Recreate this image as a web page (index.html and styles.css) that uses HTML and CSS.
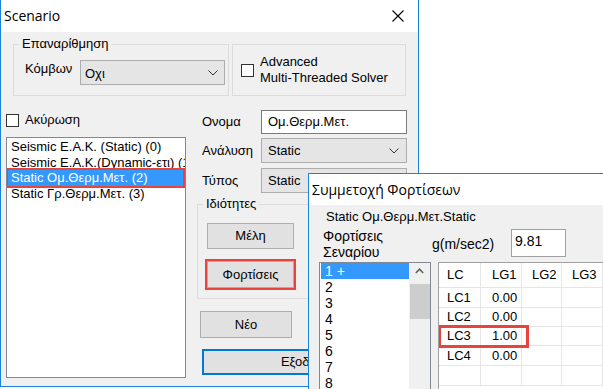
FILE: index.html
```html
<!DOCTYPE html>
<html lang="el">
<head>
<meta charset="utf-8">
<title>Scenario</title>
<link rel="stylesheet" href="styles.css">
</head>
<body>
<div class="win main">
  <div class="titlebar">
    <span class="title">Scenario</span>
    <svg class="close" width="12" height="12" viewBox="0 0 12 12"><path d="M0.5 0.5 L11.5 11.5 M11.5 0.5 L0.5 11.5" stroke="#000" stroke-width="1.1" fill="none"/></svg>
  </div>
  <div class="mbody">
    <div class="row1">
      <fieldset class="grp g1">
        <legend>Επαναρίθμηση</legend>
        <div class="g1-in">
          <span class="lbl-k">Κόμβων</span>
          <div class="combo c-oxi"><span class="ctext">Οχι</span><svg class="chev" width="10" height="6" viewBox="0 0 10 6"><path d="M0.5 0.5 L5 5 L9.5 0.5" stroke="#333" stroke-width="1" fill="none"/></svg></div>
        </div>
      </fieldset>
      <div class="grp g2">
        <span class="chk"></span>
        <span class="chk-text">Advanced<br>Multi-Threaded Solver</span>
      </div>
    </div>
    <div class="row2">
      <div class="leftcol">
        <div class="chkrow"><span class="chk"></span><span>Ακύρωση</span></div>
        <div class="listbox">
          <div class="item">Seismic Ε.Α.Κ. (Static) (0)</div>
          <div class="item">Seismic Ε.Α.Κ.(Dynamic-ετι) (1)</div>
          <div class="item sel">Static Ομ.Θερμ.Μετ. (2)</div>
          <div class="item">Static Γρ.Θερμ.Μετ. (3)</div>
        </div>
      </div>
      <div class="rightcol">
        <div class="field f1"><span class="flabel">Ονομα</span><div class="textbox">Ομ.Θερμ.Μετ.</div></div>
        <div class="field f2"><span class="flabel">Ανάλυση</span><div class="combo c-wide"><span class="ctext">Static</span><svg class="chev" width="10" height="6" viewBox="0 0 10 6"><path d="M0.5 0.5 L5 5 L9.5 0.5" stroke="#333" stroke-width="1" fill="none"/></svg></div></div>
        <div class="field f3"><span class="flabel">Τύπος</span><div class="combo c-wide"><span class="ctext">Static</span><svg class="chev" width="10" height="6" viewBox="0 0 10 6"><path d="M0.5 0.5 L5 5 L9.5 0.5" stroke="#333" stroke-width="1" fill="none"/></svg></div></div>
        <fieldset class="grp g3">
          <legend>Ιδιότητες</legend>
          <div class="g3-in">
            <div class="btn b-mel">Μέλη</div>
            <div class="btn b-fort">Φορτίσεις</div>
          </div>
        </fieldset>
        <div class="btn b-neo">Νέο</div>
        <div class="btn b-exit">Εξοδος</div>
      </div>
    </div>
  </div>
</div>

<div class="win dlg">
  <div class="titlebar t2">
    <span class="title">Συμμετοχή Φορτίσεων</span>
  </div>
  <div class="dbody">
    <div class="dname">Static Ομ.Θερμ.Μετ.Static</div>
    <div class="drow">
      <div class="dlabel">Φορτίσεις<br>Σεναρίου</div>
      <div class="glabel">g(m/sec2)</div>
      <div class="ginput">9.81</div>
    </div>
    <div class="drow3">
      <div class="nlist">
        <div class="nitems">
          <div class="nitem sel">1 +</div>
          <div class="nitem">2</div>
          <div class="nitem">3</div>
          <div class="nitem">4</div>
          <div class="nitem">5</div>
          <div class="nitem">6</div>
          <div class="nitem">7</div>
          <div class="nitem">8</div>
        </div>
        <div class="sbar">
          <svg class="sup" width="9" height="6" viewBox="0 0 9 6"><path d="M0.8 5 L4.5 1.2 L8.2 5" stroke="#606060" stroke-width="1.6" fill="none"/></svg>
          <div class="thumb"></div>
        </div>
      </div>
      <div class="grid">
        <div class="grow hdr"><div class="c c1">LC</div><div class="c c2">LG1</div><div class="c c3">LG2</div><div class="c c4">LG3</div><div class="c c5"></div></div>
        <div class="grow r1"><div class="c c1">LC1</div><div class="c c2">0.00</div><div class="c c3"></div><div class="c c4"></div><div class="c c5"></div></div>
        <div class="grow r2"><div class="c c1">LC2</div><div class="c c2">0.00</div><div class="c c3"></div><div class="c c4"></div><div class="c c5"></div></div>
        <div class="grow r3"><div class="c c1">LC3</div><div class="c c2">1.00</div><div class="c c3"></div><div class="c c4"></div><div class="c c5"></div></div>
        <div class="grow r4"><div class="c c1">LC4</div><div class="c c2">0.00</div><div class="c c3"></div><div class="c c4"></div><div class="c c5"></div></div>
        <div class="grow r5"><div class="c c1"></div><div class="c c2"></div><div class="c c3"></div><div class="c c4"></div><div class="c c5"></div></div>
        <div class="redbox"></div>
      </div>
    </div>
  </div>
</div>
</body>
</html>
```

FILE: styles.css
```css
* { box-sizing: border-box; margin: 0; padding: 0; }
html, body { width: 603px; height: 389px; overflow: hidden; background: #fff; }
body {
  position: relative;
  font-family: "Liberation Sans", Arial, sans-serif;
  font-size: 13px;
  line-height: 16px;
  color: #000;
}

.win {
  position: absolute;
  border: 1px solid #1a82d9;
  background: #f0f0f0;
  display: flex;
  flex-direction: column;
  overflow: hidden;
}
.main { left: 0; top: -1px; width: 419px; height: 388px; }
.dlg { left: 308px; top: 173px; width: 295px; height: 216px; border-right: none; border-bottom: none; }

.titlebar {
  flex: none;
  height: 32px;
  background: #fff;
  display: flex;
  align-items: center;
  justify-content: space-between;
}
.t2 { height: 31px; }
.title {
  font-family: "Open Sans", "Noto Sans", sans-serif;
  font-size: 14px;
  padding-left: 3px;
}
.close { margin-right: 14px; }

/* main body */
.mbody { flex: 1; padding: 5px 0 0 5px; display: flex; flex-direction: column; }
.row1 { display: flex; gap: 3px; margin-left: 7px; }

fieldset.grp {
  border: 1px solid #dcdcdc;
  padding: 0;
  min-width: 0;
}
fieldset.grp legend {
  line-height: 14px;
  padding: 0 3px;
  margin-left: 5px;
}
.g1 { width: 216px; }
.g1-in { display: flex; padding: 9px 3px 10px 11px; }
.lbl-k { width: 55px; margin-top: 1px; }

.combo {
  height: 25px;
  background: #e5e5e5;
  border: 1px solid #adadad;
  display: flex;
  align-items: center;
  justify-content: space-between;
}
.c-oxi { width: 145px; padding: 0 6px 0 4px; }
.c-oxi .ctext { margin-top: 3px; }
.c-wide { width: 146px; padding: 0 7px 0 6px; }

.g2 {
  width: 174px;
  height: 52px;
  margin-top: 7px;
  border: 1px solid #dcdcdc;
  display: flex;
  align-items: center;
  padding-left: 8px;
}
.chk {
  flex: none;
  width: 13px;
  height: 13px;
  background: #fff;
  border: 1px solid #333;
}
.g2 .chk-text { margin-left: 6px; }

.row2 { display: flex; margin-top: 14px; }
.leftcol { width: 180px; display: flex; flex-direction: column; }
.chkrow { height: 20px; display: flex; align-items: center; gap: 6px; }
.listbox {
  margin-top: 7px;
  height: 241px;
  background: #fff;
  border: 1px solid #828790;
  padding: 1px 2px 1px 1px;
  overflow: hidden;
}
.item {
  height: 15.6px;
  line-height: 15.6px;
  padding-left: 3px;
  white-space: nowrap;
}
.item.sel {
  background: #3399ff;
  color: #fff;
  outline: 2px solid #e8433d;
}

.rightcol { width: 210px; margin-left: 11px; display: flex; flex-direction: column; }
.field { display: flex; align-items: center; }
.flabel { width: 59px; margin-left: 5px; }
.f1 { height: 24px; }
.f2 { margin-top: 4px; }
.f3 { margin-top: 5px; }
.textbox {
  width: 146px;
  height: 24px;
  background: #fff;
  border: 1px solid #7a7a7a;
  padding-left: 6px;
  display: flex;
  align-items: center;
}

.g3 { margin-top: 4px; }
.g3-in { padding: 12px 0 10px 9px; display: flex; flex-direction: column; gap: 12px; }

.btn {
  background: #e1e1e1;
  border: 1px solid #adadad;
  display: flex;
  align-items: center;
  justify-content: center;
}
.b-mel { width: 87px; height: 26px; }
.b-fort { width: 87px; height: 27px; outline: 2px solid #e8433d; }
.b-neo { width: 92px; height: 27px; margin-top: 12px; margin-left: 3px; }
.b-exit { width: 200px; height: 26px; margin-top: 11px; margin-left: 5px; border: 2px solid #0078d7; }

/* dialog 2 */
.dbody { flex: 1; padding-top: 4px; overflow: hidden; }
.dname { margin-left: 17px; }
.drow { display: flex; margin-top: 3px; height: 32px; }
.dlabel { width: 109px; margin-left: 14px; font-size: 14px; }
.glabel { width: 79px; align-self: center; font-size: 14px; }
.ginput {
  width: 55px;
  height: 28px;
  margin-top: 1px;
  background: #fff;
  border: 1px solid #a0a0a0;
  padding: 3px 0 0 3px;
  font-size: 14px;
}

.drow3 { display: flex; margin-top: 2px; }
.nlist {
  width: 112px;
  height: 127px;
  margin-left: 10px;
  background: #fff;
  border: 1px solid #828790;
  border-bottom: none;
  display: flex;
  padding-left: 1px;
  overflow: hidden;
}
.nitems { width: 88px; }
.nitem { height: 16px; line-height: 16px; padding-left: 4px; font-size: 14px; }
.nitem.sel { background: #3399ff; color: #fff; }
.sbar {
  width: 21px;
  background: #f0f0f0;
  display: flex;
  flex-direction: column;
  align-items: center;
}
.sup { margin-top: 5px; }
.thumb { width: 20px; height: 35px; margin-top: 10px; background: #cdcdcd; }

.grid {
  position: relative;
  margin-left: 7px;
  flex: 1;
  height: 127px;
  background: #fff;
  border: 1px solid #a0a0a0;
  border-right: none;
  border-bottom: none;
  overflow: hidden;
}
.grow { display: flex; height: 20px; border-bottom: 1px solid #e6e6e6; }
.grow.hdr { height: 25px; }
.r2, .r3 { height: 19px; }
.c {
  height: 100%;
  border-right: 1px solid #e6e6e6;
  display: flex;
  align-items: center;
}
.c1 { flex: none; width: 42px; padding-left: 8px; }
.c2 { flex: none; width: 41px; padding-left: 11px; }
.c3 { flex: none; width: 40px; padding-left: 10px; }
.c4 { flex: none; width: 41px; padding-left: 10px; }
.c5 { flex: 1; border-right: none; }

.redbox {
  position: absolute;
  left: -1px;
  top: 62px;
  width: 91px;
  height: 23px;
  border: 3px solid #e8433d;
}
```
